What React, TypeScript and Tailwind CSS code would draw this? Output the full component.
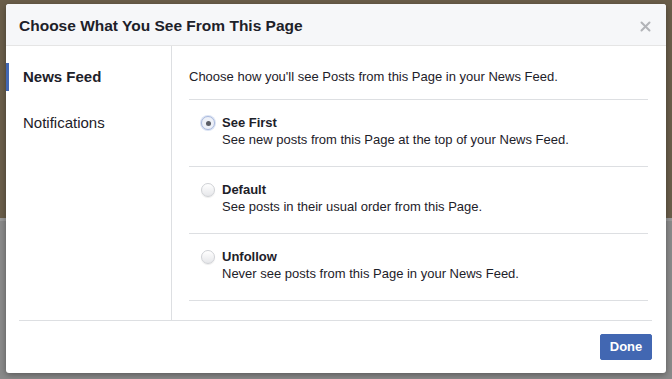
import React from "react";

function Radio({ checked }: { checked?: boolean }) {
  if (checked) {
    return (
      <span className="mt-[2px] flex h-[14px] w-[14px] shrink-0 items-center justify-center rounded-full border border-[#a9b9dd] bg-[#eef1f8] shadow-[0_0_0_1px_#dbe3f3]">
        <span className="h-[5px] w-[5px] rounded-full bg-[#5b5e66]" />
      </span>
    );
  }
  return (
    <span className="mt-[2px] h-[14px] w-[14px] shrink-0 rounded-full border border-[#cfd1d5] bg-gradient-to-b from-[#ffffff] to-[#e6e7ea] shadow-[0_1px_1px_rgba(0,0,0,0.08)]" />
  );
}

function Option({ title, desc, checked }: { title: string; desc: string; checked?: boolean }) {
  return (
    <div className="flex h-[67px] items-start gap-[7px] border-b border-[#dddfe2] pl-[12px] pt-[14px]">
      <Radio checked={checked} />
      <div className="flex flex-col">
        <span className="text-[13px] font-bold leading-[17px] text-[#1d2129]">{title}</span>
        <span className="text-[13px] leading-[17px] text-[#1d2129]">{desc}</span>
      </div>
    </div>
  );
}

export default function App() {
  return (
    <div
      className="relative h-[379px] w-[672px] overflow-hidden bg-[#8a8a8a]"
      style={{ fontFamily: '"Liberation Sans", Arial, Helvetica, sans-serif' }}
    >
      <div className="h-[218px] w-full bg-[#6a5e4a]" />
      <div className="h-[3px] w-full bg-[#9a9a9a]" />

      <div className="absolute left-[6px] top-[4px] flex h-[369px] w-[660px] flex-col overflow-hidden rounded-[3px] bg-white shadow-[0_2px_6px_rgba(0,0,0,0.35)]">
        <div className="flex h-[42px] shrink-0 items-center justify-between border-b border-[#e5e5e5] bg-[#f6f7f9] pl-[13px] pr-[15px] pt-[3px]">
          <span className="text-[15.5px] font-bold text-[#1d2129]">Choose What You See From This Page</span>
          <svg width="11" height="11" viewBox="0 0 11 11" className="mt-[1px]">
            <path d="M1.5 1.5 L9.5 9.5 M9.5 1.5 L1.5 9.5" stroke="#b2b4b8" strokeWidth="2" strokeLinecap="round" />
          </svg>
        </div>

        <div className="flex h-[274px] shrink-0">
          <div className="w-[166px] shrink-0 border-r border-[#dddfe2] pt-[17px]">
            <div className="flex h-[28px] items-center border-l-[3px] border-[#4267b2] pl-[14px] text-[15px] font-bold text-[#1d2129]">
              News Feed
            </div>
            <div className="mt-[18px] flex h-[28px] items-center pl-[17px] text-[15px] text-[#1d2129]">Notifications</div>
          </div>
          <div className="flex-1 pl-[17px] pr-[18px]">
            <div className="flex h-[54px] items-center border-b border-[#dddfe2] pt-[8px] text-[13px] text-[#1d2129]">
              Choose how you'll see Posts from this Page in your News Feed.
            </div>
            <Option checked title="See First" desc="See new posts from this Page at the top of your News Feed." />
            <Option title="Default" desc="See posts in their usual order from this Page." />
            <Option title="Unfollow" desc="Never see posts from this Page in your News Feed." />
          </div>
        </div>
        <div className="ml-[13px] mr-[14px] h-px shrink-0 bg-[#dddfe2]" />

        <div className="flex flex-1 items-start justify-end pr-[14px] pt-[13px]">
          <button className="flex h-[26px] w-[52px] items-center justify-center rounded-[2px] border border-[#4267b2] bg-[#4267b2] text-[13px] font-bold text-white">
            Done
          </button>
        </div>
      </div>
    </div>
  );
}
